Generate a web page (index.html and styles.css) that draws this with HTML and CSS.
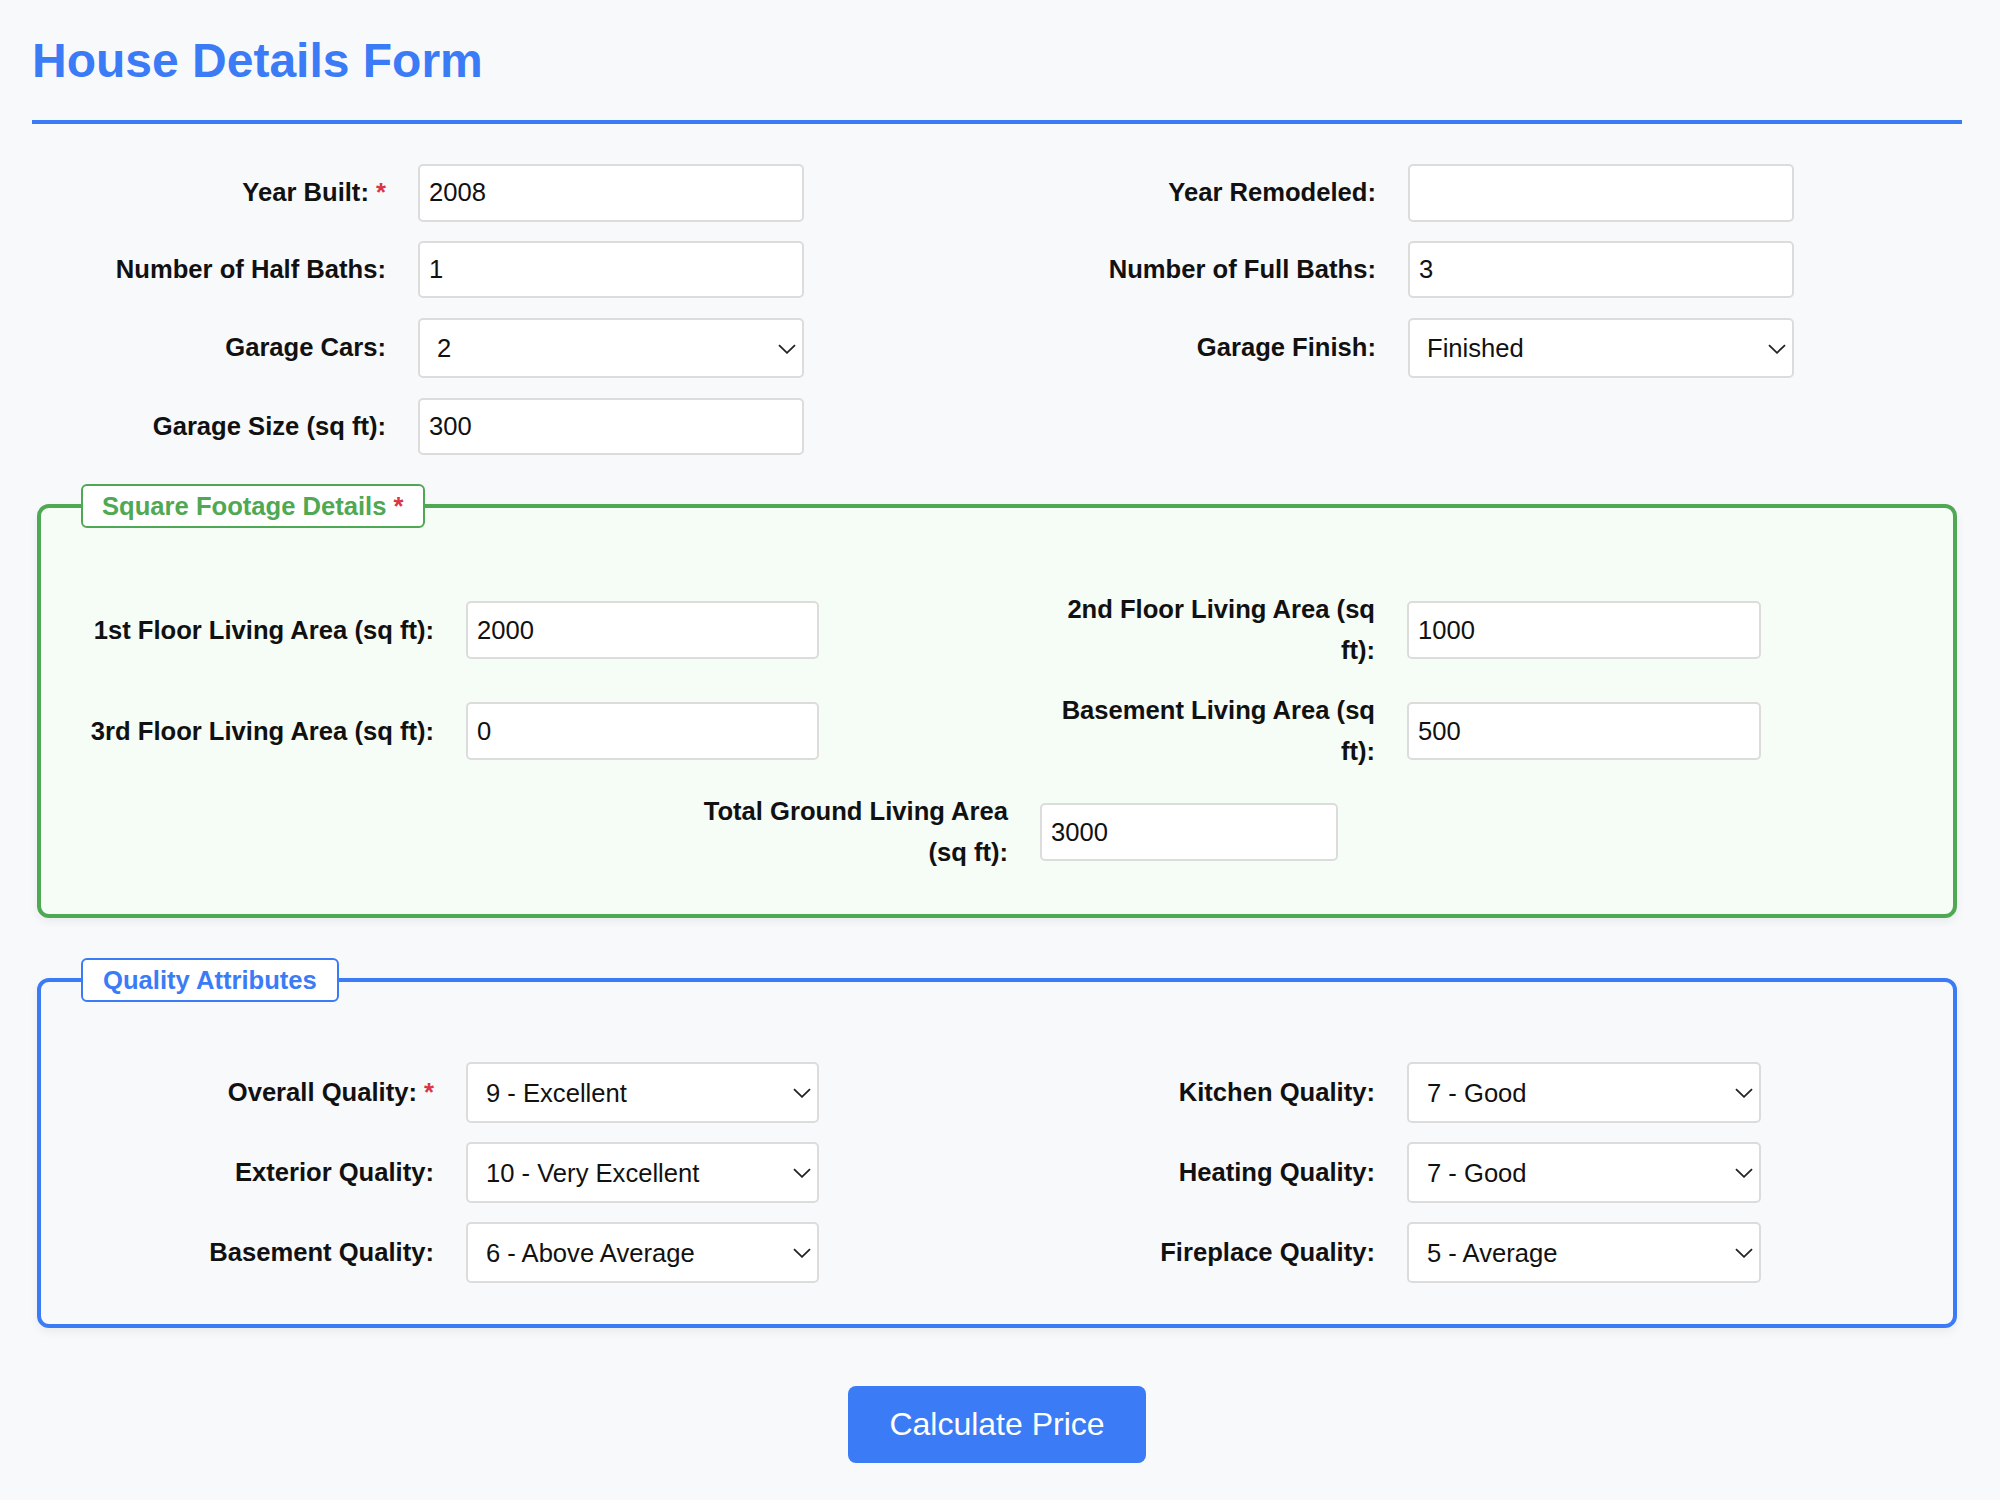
FILE: index.html
```html
<!DOCTYPE html>
<html lang="en">
<head>
<meta charset="utf-8">
<title>House Details Form</title>
<link rel="stylesheet" href="styles.css">
</head>
<body>
<h1 class="title">House Details Form</h1>
<form class="form">
  <div class="top-grid">
    <div class="field">
      <label class="label" for="yb">Year Built: <span class="req">*</span></label>
      <input class="input" id="yb" type="text" value="2008">
    </div>
    <div class="field">
      <label class="label" for="yr">Year Remodeled:</label>
      <input class="input" id="yr" type="text" value="">
    </div>
    <div class="field">
      <label class="label" for="hb">Number of Half Baths:</label>
      <input class="input" id="hb" type="text" value="1">
    </div>
    <div class="field">
      <label class="label" for="fb">Number of Full Baths:</label>
      <input class="input" id="fb" type="text" value="3">
    </div>
    <div class="field">
      <label class="label" for="gc">Garage Cars:</label>
      <div class="select-wrap">
        <select class="select" id="gc"><option>2</option></select>
        <svg class="chev" viewBox="0 0 18 10"><path d="M1 1.2 L9 8.8 L17 1.2"/></svg>
      </div>
    </div>
    <div class="field">
      <label class="label" for="gf">Garage Finish:</label>
      <div class="select-wrap">
        <select class="select" id="gf"><option>Finished</option></select>
        <svg class="chev" viewBox="0 0 18 10"><path d="M1 1.2 L9 8.8 L17 1.2"/></svg>
      </div>
    </div>
    <div class="field">
      <label class="label" for="gs">Garage Size (sq ft):</label>
      <input class="input" id="gs" type="text" value="300">
    </div>
  </div>

  <div class="section section-green">
    <div class="legend legend-green">Square Footage Details <span class="req">*</span></div>
    <div class="sec-grid">
      <div class="field">
        <label class="label label-fixed" for="f1">1st Floor Living Area (sq ft):</label>
        <input class="input input-fill" id="f1" type="text" value="2000">
      </div>
      <div class="field">
        <label class="label label-fixed" for="f2">2nd Floor Living Area (sq ft):</label>
        <input class="input input-fill" id="f2" type="text" value="1000">
      </div>
      <div class="field">
        <label class="label label-fixed" for="f3">3rd Floor Living Area (sq ft):</label>
        <input class="input input-fill" id="f3" type="text" value="0">
      </div>
      <div class="field">
        <label class="label label-fixed" for="bl">Basement Living Area (sq ft):</label>
        <input class="input input-fill" id="bl" type="text" value="500">
      </div>
    </div>
    <div class="total-row">
      <div class="field">
        <label class="label label-fixed" for="tg">Total Ground Living Area (sq ft):</label>
        <input class="input input-total" id="tg" type="text" value="3000">
      </div>
    </div>
  </div>

  <div class="section section-blue">
    <div class="legend legend-blue">Quality Attributes</div>
    <div class="sec-grid">
      <div class="field">
        <label class="label label-fixed" for="oq">Overall Quality: <span class="req">*</span></label>
        <div class="select-wrap fill">
          <select class="select select-q" id="oq"><option>9 - Excellent</option></select>
          <svg class="chev" viewBox="0 0 18 10"><path d="M1 1.2 L9 8.8 L17 1.2"/></svg>
        </div>
      </div>
      <div class="field">
        <label class="label label-fixed" for="kq">Kitchen Quality:</label>
        <div class="select-wrap fill">
          <select class="select select-q" id="kq"><option>7 - Good</option></select>
          <svg class="chev" viewBox="0 0 18 10"><path d="M1 1.2 L9 8.8 L17 1.2"/></svg>
        </div>
      </div>
      <div class="field">
        <label class="label label-fixed" for="eq">Exterior Quality:</label>
        <div class="select-wrap fill">
          <select class="select select-q" id="eq"><option>10 - Very Excellent</option></select>
          <svg class="chev" viewBox="0 0 18 10"><path d="M1 1.2 L9 8.8 L17 1.2"/></svg>
        </div>
      </div>
      <div class="field">
        <label class="label label-fixed" for="hq">Heating Quality:</label>
        <div class="select-wrap fill">
          <select class="select select-q" id="hq"><option>7 - Good</option></select>
          <svg class="chev" viewBox="0 0 18 10"><path d="M1 1.2 L9 8.8 L17 1.2"/></svg>
        </div>
      </div>
      <div class="field">
        <label class="label label-fixed" for="bq">Basement Quality:</label>
        <div class="select-wrap fill">
          <select class="select select-q" id="bq"><option>6 - Above Average</option></select>
          <svg class="chev" viewBox="0 0 18 10"><path d="M1 1.2 L9 8.8 L17 1.2"/></svg>
        </div>
      </div>
      <div class="field">
        <label class="label label-fixed" for="fq">Fireplace Quality:</label>
        <div class="select-wrap fill">
          <select class="select select-q" id="fq"><option>5 - Average</option></select>
          <svg class="chev" viewBox="0 0 18 10"><path d="M1 1.2 L9 8.8 L17 1.2"/></svg>
        </div>
      </div>
    </div>
  </div>

  <button class="btn" type="button">Calculate Price</button>
</form>
</body>
</html>
```
FILE: styles.css
```css
html, body {
  margin: 0;
  background: #f8f9fb;
}
body {
  padding: 34px 38px 40px 32px;
  font-family: "Liberation Sans", Arial, Helvetica, sans-serif;
  color: #111;
}
.title {
  margin: 0;
  font-size: 48px;
  font-weight: 700;
  line-height: 54px;
  color: #3b7cf6;
  padding-bottom: 32px;
  border-bottom: 4px solid #3b7cf6;
}
.form {
  margin: 0;
}
.top-grid {
  margin-top: 40px;
  display: grid;
  grid-template-columns: 772px 773px;
  column-gap: 217px;
  row-gap: 19.2px;
}
.field {
  display: flex;
  align-items: center;
}
.label {
  flex: 1;
  box-sizing: border-box;
  text-align: right;
  padding-right: 32px;
  font-size: 25.6px;
  font-weight: 700;
  line-height: 40.96px;
  color: #111;
}
.label-fixed {
  flex: 0 0 379px;
  width: 379px;
}
.req {
  color: #dc3545;
}
.input {
  box-sizing: border-box;
  width: 386px;
  height: 57.6px;
  margin: 0;
  padding: 0 9px;
  border: 2px solid #dcdcdc;
  border-radius: 5px;
  background: #fff;
  font-family: "Liberation Sans", Arial, sans-serif;
  font-size: 25.6px;
  color: #111;
  outline: none;
}
.input-fill {
  flex: 1;
  width: auto;
  min-width: 0;
}
.input-total {
  width: 298px;
}
.select-wrap {
  position: relative;
  width: 386px;
  height: 60.8px;
}
.select-wrap.fill {
  flex: 1;
  width: auto;
}
.select {
  -webkit-appearance: none;
  appearance: none;
  box-sizing: border-box;
  width: 100%;
  height: 60.8px;
  margin: 0;
  padding: 0 40px 0 17px;
  border: 2px solid #dcdcdc;
  border-radius: 5px;
  background: #fff;
  font-family: "Liberation Sans", Arial, sans-serif;
  font-size: 25.6px;
  color: #111;
  outline: none;
}
.select-q {
  padding-left: 18px;
}
.chev {
  position: absolute;
  right: 8px;
  top: 26px;
  width: 18px;
  height: 10px;
  pointer-events: none;
}
.chev path {
  fill: none;
  stroke: #222;
  stroke-width: 1.8;
}
.section {
  position: relative;
  margin: 49px 5px 0;
  border: 4px solid;
  border-radius: 12px;
  padding: 81px 46px 41px;
  box-shadow: 0 4px 10px rgba(0, 0, 0, 0.06);
}
.section-green {
  border-color: #4fa853;
  background: #f6fcf6;
}
.section-blue {
  margin-top: 60px;
  padding-top: 80px;
  border-color: #3b7cf6;
  background: #f8f9fb;
}
.legend {
  position: absolute;
  top: -24px;
  left: 40px;
  box-sizing: border-box;
  height: 44px;
  padding: 0 19px;
  border: 2px solid;
  border-radius: 6px;
  background: #fff;
  font-size: 25.6px;
  font-weight: 700;
  line-height: 40px;
  white-space: nowrap;
}
.legend-green {
  color: #4fa853;
  border-color: #4fa853;
}
.legend-blue {
  color: #3b7cf6;
  border-color: #3b7cf6;
  padding: 0 20px;
}
.sec-grid {
  display: grid;
  grid-template-columns: 732px 733px;
  column-gap: 209px;
  row-gap: 19.2px;
}
.total-row {
  display: flex;
  justify-content: center;
  margin-top: 19.2px;
  margin-left: -46px;
  margin-right: -46px;
  padding-left: 5px;
}
.btn {
  display: block;
  margin: 58px auto 0;
  padding: 20px 41px;
  border: none;
  border-radius: 8px;
  background: #3b7cf6;
  color: #fff;
  font-family: "Liberation Sans", Arial, sans-serif;
  font-size: 32px;
  line-height: 37px;
  cursor: pointer;
}
```
